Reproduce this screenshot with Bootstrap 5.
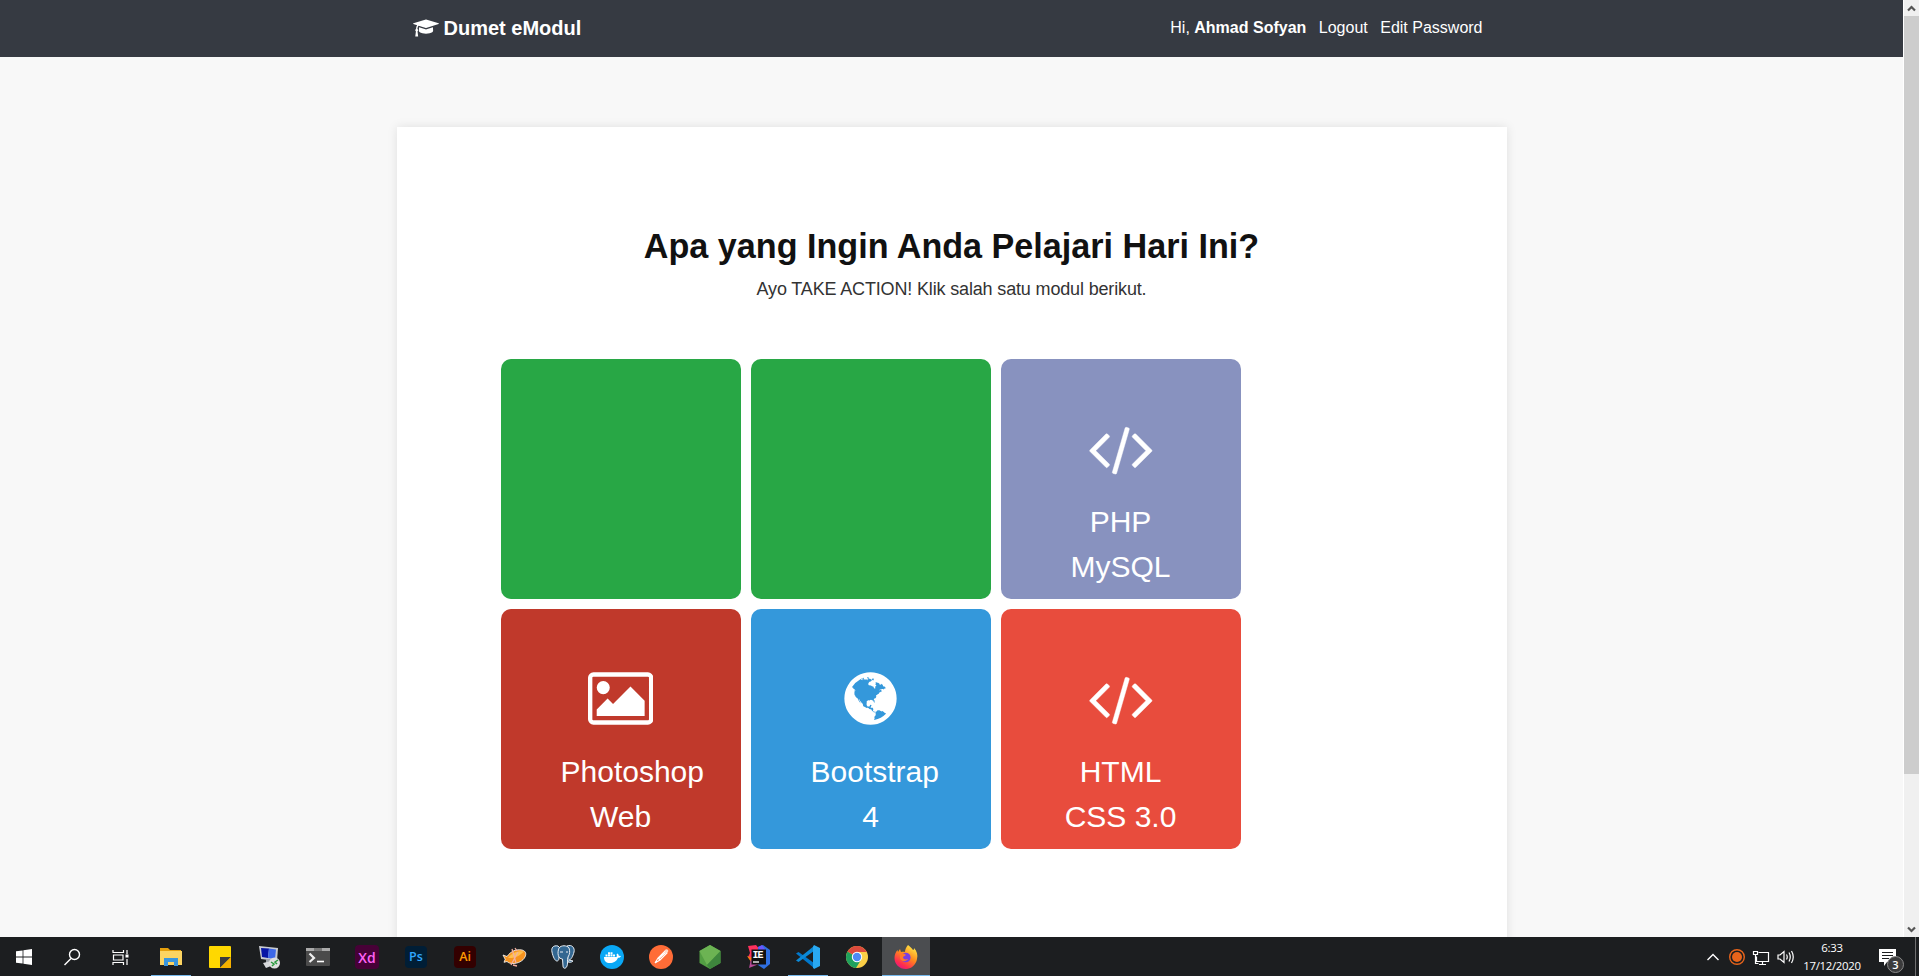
<!DOCTYPE html>
<html lang="id">
<head>
<meta charset="utf-8">
<meta name="viewport" content="width=device-width, initial-scale=1">
<title>Dumet eModul</title>
<link href="https://cdn.jsdelivr.net/npm/bootstrap@5.3.0/dist/css/bootstrap.min.css" rel="stylesheet">
<style>
  body{font-family:"Liberation Sans",Arial,sans-serif;background:#f8f8f8;height:976px;color:#333}
  .viewport{height:937px}
  .topbar{background:#363a42;height:57px}
  .wrap{width:1110px}
  .topbar .wrap{padding:0 24px 0 16px}
  .brand{font-size:20px;gap:5px;padding-bottom:1px}
  .menu{gap:12.5px;padding-bottom:1px}
  .menu a,.brand{color:#fff;text-decoration:none}
  .sheet{margin-top:70px;height:900px;padding:97px 104px 0;box-shadow:0 0 10px rgba(0,0,0,.1)}
  .title{font-size:34.15px;line-height:44px;color:#111;margin:0}
  .sub{font-size:18px;line-height:27px;margin:7.500px 0 0;letter-spacing:-.155px}
  .tiles{margin-top:56.500px;gap:10px;width:740px}
  .tile{width:240px;height:240px;border-radius:10px;padding:59px 60px 0;color:#fff;font-size:30px;line-height:45px;text-decoration:none;background:#28a745}
  .tile svg{display:block;margin:0 auto 20px;height:61px}
  .tile span{display:block;white-space:nowrap;width:120px}
  .php{background:#8892bf}.pshop{background:#c0392b}.boot{background:#3498db}.html5{background:#e84c3d}
  .scroller{width:16px;background:#f0f0f0;border-left:1px solid #fff}
  .thumb{height:758px;background:#cdcdcd}
  .taskbar{height:39px;background:#1c1e20;font-family:"Open Sans","Noto Sans",sans-serif}
  .cell{width:48px;height:39px;padding-top:1px}
  .app{width:49px;height:39px;padding-top:1px;background:linear-gradient(#76b9ed,#76b9ed) center bottom/0 1px no-repeat}
  .run{background-size:40px 1px}
  .now{background-color:#4b4d50;background-size:49px 1px;width:48px}
  .clock{font-size:11.400px;line-height:18px;color:#fff;width:70px;letter-spacing:-.3px}
  .adobe{width:24px;height:24px;border-radius:4px;font-weight:600;font-size:14px}
  .xd{background:#470137;color:#ff61f6}.ps{background:#001e36;color:#31a8ff;width:22px;height:22px;font-size:12.500px}.ai{background:#330000;color:#ff9a00;width:22px;height:22px;font-size:12.500px}
  .noti{width:24px;height:24px;margin:8px 12px 0}
  .count{position:absolute;left:8px;top:7px;width:17px;height:17px;border:1px solid #8a8a8a;background:#3b3b3c;color:#fff;font-size:11px;font-weight:600;line-height:15px}
  .peek{border-left:1px solid #6f6f70;margin-right:3px}
</style>
</head>
<body class="overflow-hidden d-flex flex-column">
<div class="viewport d-flex overflow-hidden">
  <div class="flex-grow-1">
    <nav class="topbar d-flex justify-content-center">
      <div class="wrap d-flex justify-content-between align-items-center">
        <a class="brand d-flex align-items-center fw-bold" href="#">
          <svg width="26" height="20" viewBox="0 0 2304 1792" fill="#fff"><path d="M1774 836l18 316q4 69-82 128t-235 93.500-323 34.500-323-34.500-235-93.500-82-128l18-316 574 181q22 7 48 7t48-7zm530-324q0 23-22 31l-1120 352q-4 1-10 1t-10-1l-652-206q-43 34-71 111.500t-34 178.500q63 36 63 109 0 69-58 107l58 433q2 14-8 25-9 11-24 11h-192q-15 0-24-11-10-11-8-25l58-433q-58-38-58-107 0-73 65-111 11-207 98-330l-333-104q-22-8-22-31t22-31l1120-352q4-1 10-1t10 1l1120 352q22 8 22 31z"/></svg>
          Dumet eModul
        </a>
        <div class="menu d-flex text-white"><span>Hi, <b>Ahmad Sofyan</b></span><a href="#">Logout</a><a href="#">Edit Password</a></div>
      </div>
    </nav>
    <main class="sheet wrap bg-white mx-auto">
      <h1 class="title fw-bold text-center">Apa yang Ingin Anda Pelajari Hari Ini?</h1>
      <p class="sub text-center">Ayo TAKE ACTION! Klik salah satu modul berikut.</p>
      <div class="tiles d-flex flex-wrap">
        <a class="tile" href="#"></a>
        <a class="tile" href="#"></a>
        <a class="tile php text-center" href="#"><svg viewBox="0 0 2048 1792" fill="#fff"><path id="code" d="M681 1399l-50 50q-10 10-23 10t-23-10l-466-466q-10-10-10-23t10-23l466-466q10-10 23-10t23 10l50 50q10 10 10 23t-10 23l-393 393 393 393q10 10 10 23t-10 23zm591-1067l-373 1291q-4 13-15.500 19.500t-23.500 2.500l-62-17q-13-4-19.500-15.500t-2.500-24.500l373-1291q4-13 15.500-19.500t23.500-2.500l62 17q13 4 19.500 15.500t2.500 24.500zm657 651l-466 466q-10 10-23 10t-23-10l-50-50q-10-10-10-23t10-23l393-393-393-393q-10-10-10-23t10-23l50-50q10-10 23-10t23 10l466 466q10 10 10 23t-10 23z" stroke="#fff" stroke-width="14"/></svg><span>PHP<br>MySQL</span></a>
        <a class="tile pshop text-center" href="#"><svg viewBox="0 0 1920 1792" fill="#fff"><path d="M640 576q0 80-56 136t-136 56-136-56-56-136 56-136 136-56 136 56 56 136zm1024 384v448h-1408v-192l320-320 160 160 512-512zm96-704h-1600q-13 0-22.500 9.500t-9.500 22.500v1216q0 13 9.500 22.500t22.500 9.500h1600q13 0 22.500-9.500t9.500-22.500v-1216q0-13-9.500-22.500t-22.500-9.500zm160 32v1216q0 66-47 113t-113 47h-1600q-66 0-113-47t-47-113v-1216q0-66 47-113t113-47h1600q66 0 113 47t47 113z"/></svg><span>Photoshop</span><span>Web</span></a>
        <a class="tile boot text-center" href="#"><svg viewBox="0 0 1792 1792" fill="#fff"><path d="M896 128q209 0 385.500 103t279.500 279.500 103 385.500-103 385.500-279.500 279.500-385.500 103-385.500-103-279.500-279.500-103-385.500 103-385.500 279.500-279.500 385.500-103zm274 521q-2 1-9.500 9.500t-13.500 9.500q2 0 4.500-5t5-11 3.500-7q6-7 22-15 14-6 52-12 34-8 51 11-2-2 9.500-13t14.500-12q3-2 15-4.500t15-7.500l2-22q-12 1-17.500-7t-6.500-21q0 2-6 8 0-7-4.500-8t-11.500 1-9 1q-10-3-15-7.500t-8-16.500-4-15q-2-5-9.500-11t-9.500-10q-1-2-2.500-5.500t-3-6.500-4-5.500-5.500-2.500-7 5-7.500 10-4.500 5q-3-2-6-1.500t-4.500 1-4.500 3-5 3.500q-3 2-8.500 3t-8.500 2q15-5-1-11-10-4-16-3 9-4 7.500-12t-8.500-14h5q-1-4-8.500-8.500t-17.500-8.500-13-6q-8-5-34-9.500t-33-.5q-5 6-4.500 10.500t4 14 3.500 12.500q1 6-5.500 13t-6.500 12q0 7 14 15.500t10 21.500q-3 8-16 16t-16 12q-5 8-1.500 18.500t10.500 16.500q2 2 1.500 4t-3.500 4.500-5.500 4-6.500 3.500l-3 2q-11 5-20.500-6t-13.500-26q-7-25-16-30-23-8-29 1-5-13-41-26-25-9-58-4 6-1 0-15-7-15-19-12 3-6 4-17.500t1-13.500q3-13 12-23 1-1 7-8.500t9.500-13.500.5-6q35 4 50-11 5-5 11.500-17t10.500-17q9-6 14-5.500t14.500 5.500 14.500 5q14 1 15.500-11t-7.500-20q12 1 3-17-5-7-8-9-12-4-27 5-8 4 2 8-1-1-9.500 10.500t-16.500 17.500-16-5q-1-1-5.500-13.500t-9.500-13.500q-8 0-16 15 3-8-11-15t-24-8q19-12-8-27-7-4-20.500-5t-19.500 4q-5 7-5.500 11.500t5 8 10.500 5.500 11.500 4 8.500 3q14 10 8 14-2 1-8.500 3.500t-11.500 4.500-6 4q-3 4 0 14t-2 14q-5-5-9-17.500t-7-16.500q7 9-25 6l-10-1q-4 0-16 2t-20.500 1-13.500-8q-4-8 0-20 1-4 4-2-4-3-11-9.500t-10-8.500q-46 15-94 41 6 1 12-1 5-2 13-6.500t10-5.500q34-14 42-7l5-5q14 16 20 25-7-4-30-1-20 6-22 12 7 12 5 18-4-3-11.500-10t-14.500-11-15-5q-16 0-22 1-146 80-235 222 7 7 12 8 4 1 5 9t2.500 11 11.500-3q9 8 3 19 1-1 44 27 19 17 21 21 3 11-10 18-1-2-9-9t-9-4q-3 5 .5 18.500t10.500 12.500q-7 0-9.500 16t-2.500 35.500-1 23.500l2 1q-3 12 5.500 34.500t21.500 19.500q-13 3 20 43 6 8 8 9 3 2 12 7.500t15 10 10 10.500q4 5 10 22.500t14 23.500q-2 6 9.500 20t10.500 23q-1 0-2.500 1t-2.500 1q3 7 15.500 14t15.500 13q1 3 2 10t3 11 8 2q2-20-24-62-15-25-17-29-3-5-5.500-15.500t-4.500-14.500q2 0 6 1.500t8.500 3.500 7.500 4 2 3q-3 7 2 17.500t12 18.500 17 19 12 13q6 6 14 19.500t0 13.500q9 0 20 10.500t17 19.500q5 8 8 26t5 24q2 7 8.500 13.500t12.500 9.500l16 8 13 7q5 2 18.500 10.500t21.500 11.500q10 4 16 4t14.500-2.500 13.500-3.500q15-2 29 15t21 21q36 19 55 11-2 1 .5 7.500t8 15.500 9 14.500 5.500 8.500q5 6 18 15t18 15q6-4 7-9-3 8 7 20t18 10q14-3 14-32-31 15-49-18 0-1-2.500-5.500t-4-8.500-2.500-8.500 0-7.500 5-3q9 0 10-3.500t-2-12.500-4-13q-1-8-11-20t-12-15q-5 9-16 8t-16-9q0 1-1.500 5.500t-1.500 6.500q-13 0-15-1 1-3 2.500-17.500t3.500-22.500q1-4 5.500-12t7.500-14.500 4-12.500-4.500-9.500-17.500-2.500q-19 1-26 20-1 3-3 10.500t-5 11.500-9 7q-7 3-24 2t-24-5q-13-8-22.500-29t-9.500-37q0-10 2.500-26.500t3-25-5.500-24.500q3-2 9-9.500t10-10.500q2-1 4.500-1.500t4.500 0 4-1.500 3-6q-1-1-4-3-3-3-4-3 7 3 28.500-1.500t27.500 1.500q15 11 22-2 0-1-2.500-9.500t-.5-13.500q5 27 29 9 3 3 15.500 5t17.500 5q3 2 7 5.500t5.500 4.500 5-.5 8.500-6.500q10 14 12 24 11 40 19 44 7 3 11 2t4.500-9.500 0-14-1.500-12.500l-1-8v-18l-1-8q-15-3-18.500-12t1.500-18.500 15-18.500q1-1 8-3.500t15.500-6.500 12.500-8q21-19 15-35 7 0 11-9-1 0-5-3t-7.500-5-4.500-2q9-5 2-16 5-3 7.500-11t7.500-10q9 12 21 2 7-8 1-16 5-7 20.500-10.500t18.500-9.500q7 2 8-2t1-12 3-12q4-5 15-9t13-5l17-11q3-4 0-4 18 2 31-11 10-11-6-20 3-6-3-9.500t-15-5.500q3-1 11.500-.5t10.500-1.500q15-10-7-16-17-5-43 12zm-163 877q206-36 351-189-3-3-12.500-4.500t-12.500-3.500q-18-7-24-8 1-7-2.500-13t-8-9-12.500-8-11-7q-2-2-7-6t-7-5.500-7.500-4.500-8.500-2-10 1l-3 1q-3 1-5.500 2.500t-5.500 3-4 3 0 2.500q-21-17-36-22-5-1-11-5.500t-10.500-7-10-1.500-11.500 7q-5 5-6 15t-2 13q-7-5 0-17.500t2-18.500q-3-6-10.500-4.500t-12 4.500-11.500 8.500-9 6.500-8.500 5.500-8.500 7.500q-3 4-6 12t-5 11q-2-4-11.500-6.500t-9.500-5.500q2 10 4 35t5 38q7 31-12 48-27 25-29 40-4 22 12 26 0 7-8 20.500t-7 21.500q0 6 2 16z"/></svg><span>Bootstrap</span><span>4</span></a>
        <a class="tile html5 text-center" href="#"><svg viewBox="0 0 2048 1792" fill="#fff"><use href="#code"/></svg><span>HTML</span><span>CSS 3.0</span></a>
      </div>
    </main>
  </div>
  <div class="scroller d-flex flex-column flex-shrink-0">
    <svg width="15" height="16" viewBox="0 0 15 16"><path d="M4 10.500L7.500 7l3.500 3.500" fill="none" stroke="#555" stroke-width="2.200"/></svg>
    <div class="thumb"></div>
    <svg class="mt-auto" width="15" height="16" viewBox="0 0 15 16"><path d="M4 6.500L7.500 10 11 6.500" fill="none" stroke="#555" stroke-width="2.200"/></svg>
  </div>
</div>

<footer class="taskbar d-flex">
  <div class="cell d-flex align-items-center justify-content-center"><svg width="16" height="16" fill="#fff"><path d="M0 2.300L6.600 1.400V7.600H0zM7.400 1.300L16 0V7.600H7.400zM0 8.400H6.600V14.600L0 13.700zM7.400 8.400H16V16L7.400 14.700z"/></svg></div>
  <div class="cell d-flex align-items-center justify-content-center"><svg width="18" height="18" fill="none" stroke="#fff" stroke-width="1.400"><circle cx="11.500" cy="6.500" r="5"/><path d="M8 10.500L1.500 17"/></svg></div>
  <div class="cell d-flex align-items-center justify-content-center"><svg width="17" height="17" fill="none" stroke="#fff" stroke-width="1.200"><path d="M1 1v2.500h10.500V1M1 16v-2.500h10.500V16M1.500 6h9.500v5H1.500zM15 1v4M15 10v6"/><path d="M13.500 5.500h3v3h-3z" fill="#fff" stroke="none"/></svg></div>
  <div style="width:2.500px"></div>
  <!-- file explorer -->
  <div class="app run d-flex align-items-center justify-content-center"><svg width="22" height="18"><path d="M0 0h8l2 2h11v4H0z" fill="#e5a00d"/><path d="M0 3h22v14H0z" fill="#fcd462"/><path d="M4 18v-8h14v8h-4v-4H8v4z" fill="#3a96dd"/></svg></div>
  <!-- sticky notes -->
  <div class="app d-flex align-items-center justify-content-center"><svg width="22" height="22"><rect width="22" height="22" rx="1" fill="#ffd800"/><path d="M11 11h11L11 22z" fill="#3d3d3d"/><path d="M22 11v11H11z" fill="#f5b000"/></svg></div>
  <!-- remote desktop -->
  <div class="app d-flex align-items-center justify-content-center"><svg width="24" height="24"><path d="M2 1l19 2-1 13L4 14z" fill="#c9ccd2"/><path d="M4 3l8 .5-1 9.500-6-1z" fill="#0716a5"/><path d="M12 3.500l7 1-1 9.500-7-1z" fill="#3d68e8"/><path d="M9 14h5v4H9z" fill="#9fa4aa"/><path d="M6 18l8-2 5 3-10 4z" fill="#d7d9dc"/><circle cx="17.500" cy="18" r="5.500" fill="#dedede"/><path d="M14 17l3 2-2 2M21 15l-3 2 2 2" fill="none" stroke="#269a3a" stroke-width="1.500"/></svg></div>
  <!-- terminal -->
  <div class="app d-flex align-items-center justify-content-center"><svg width="24" height="18"><rect width="24" height="18" rx="1" fill="#4b4b4b"/><path d="M0 0h24v3H0z" fill="#aaa"/><path d="M8 0h8v3H8z" fill="#777"/><path d="M3.500 5.500L8 10l-4.500 4" fill="none" stroke="#eee" stroke-width="2.200"/><path d="M11 13.500h7" stroke="#fff" stroke-width="1.600"/></svg></div>
  <div class="app d-flex align-items-center justify-content-center"><div class="adobe xd d-flex align-items-center justify-content-center">Xd</div></div>
  <div class="app d-flex align-items-center justify-content-center"><div class="adobe ps d-flex align-items-center justify-content-center">Ps</div></div>
  <div class="app d-flex align-items-center justify-content-center"><div class="adobe ai d-flex align-items-center justify-content-center">Ai</div></div>
  <!-- zeppelin -->
  <div class="app d-flex align-items-center justify-content-center"><svg width="25" height="20"><path d="M1 8l4 1.500C9 4 14 2 20 3c4 1 4.500 4 3 7-2 4-7 6.500-12 6.500-2.500 0-4.500-.5-6-2l-3 .8 1.200-3z" fill="#f7931e" stroke="#fff" stroke-width=".8"/><path d="M6 11c4-5 9-7.500 16-6.500-4 4-9 7-16 6.500z" fill="#ffc04d"/><path d="M10 2l4 14M13 1l2 3M9 18l7-13M11 18l4 1" stroke="#f3b0a0" stroke-width="1.300" fill="none"/></svg></div>
  <!-- elephant -->
  <div class="app d-flex align-items-center justify-content-center"><svg width="24" height="24" fill="#336791" stroke="#e8edf2" stroke-width="1"><path d="M7 1C2 0 0 3 1 7c1 5 3 9 5 9 1 0 2-1 2-3l1-10z"/><path d="M16 1c5-2 8 2 7 6-1 4-3 8-5 8l4 1c-2 2-4 1-5 1z"/><path d="M8 3c2-3 8-3 10 0 1 3 1 6-1 9-1 3 0 7-1 9-1 3-4 3-4 0l-.5-7C7 14 6 8 8 3z"/><path d="M9 7h3M15 7h2" /></svg></div>
  <!-- docker -->
  <div class="app d-flex align-items-center justify-content-center"><svg width="24" height="24"><circle cx="12" cy="12" r="12" fill="#0aa8f5"/><path d="M4 12h12.500c.6-1 .3-2 0-2.500l1-1c1 .8 1.300 1.500 1.300 2.200l2.200.3c-.5 1.400-1.600 1.800-3 1.800C16.500 16.500 13.500 18 10 18c-4 0-6-2-6-6zM5.500 9.500h2v2h-2zM8 9.500h2v2H8zM10.500 9.500h2v2h-2zM8 7.200h2v2H8zM10.500 7.200h2v2h-2zM13 9.500h2v2h-2z" fill="#fff"/></svg></div>
  <!-- postman -->
  <div class="app d-flex align-items-center justify-content-center"><svg width="24" height="24"><circle cx="12" cy="12" r="12" fill="#ff6c37"/><path d="M6 18l3-5 7-7 2 2-7 7-5 3M9 13l2 2M10 13.500l6.500-6" fill="none" stroke="#fff" stroke-width="1.100"/><circle cx="17.500" cy="6" r="1.800" fill="#ffd9c9"/></svg></div>
  <!-- node -->
  <div class="app d-flex align-items-center justify-content-center"><svg width="22" height="24"><path d="M11 0l10.500 6v12L11 24 .5 18V6z" fill="#539e43"/><path d="M11 0l10.500 6L8 20 .5 6z" fill="#6cb353"/><path d="M21.500 6v12L11 24l-3-4z" fill="#3e863d"/></svg></div>
  <!-- IDE -->
  <div class="app d-flex align-items-center justify-content-center"><svg width="24" height="24"><path d="M1 1l8-1 5 6-8 10-5-4 2-4z" fill="#fe315d"/><path d="M0 11l6 2-2 4z" fill="#f97a12"/><path d="M2 23l2-9 8 5z" fill="#b74a97"/><path d="M11 2l5-2 7 5v14l-6 5-6-4z" fill="#2f6fe0"/><path d="M11 2l4-2 4 6h-6z" fill="#6b57ff"/><path d="M4.500 4.500h14.500v15H4.500z" fill="#111"/><text x="5.500" y="12.500" font-family="Liberation Mono,monospace" font-weight="bold" font-size="10" textLength="11" fill="#fff">IE</text><path d="M6 17h6" stroke="#fff" stroke-width="1.300"/></svg></div>
  <!-- vs code -->
  <div class="app run d-flex align-items-center justify-content-center"><svg width="24" height="24"><path d="M0 8.500L2.500 7 18 18v5z" fill="#0078cc"/><path d="M0 15.500L2.500 17 18 6V1z" fill="#0b8ad8"/><path d="M18 0l6 3v18l-6 3-1-1.500V1.500z" fill="#29a9f2"/></svg></div>
  <!-- chrome -->
  <div class="app d-flex align-items-center justify-content-center"><svg width="22" height="22" viewBox="0 0 22 22"><circle cx="11" cy="11" r="11" fill="#fbcf46"/><path d="M11 11L1.500 5.500A11 11 0 0 0 10 22l5.500-9z" fill="#1fa15d"/><path d="M11 11L1.500 5.500A11 11 0 0 1 20.500 5.500L20.800 6H11z" fill="#dc4a3d"/><circle cx="11" cy="11" r="5.200" fill="#fff"/><circle cx="11" cy="11" r="4.200" fill="#4d8af4"/></svg></div>
  <!-- firefox -->
  <div class="app now d-flex align-items-center justify-content-center"><svg width="24" height="24"><defs><linearGradient id="fox" x1=".8" y1="0" x2=".2" y2="1"><stop offset="0" stop-color="#fff04a"/><stop offset=".45" stop-color="#ff8a1c"/><stop offset=".8" stop-color="#ff2b50"/><stop offset="1" stop-color="#e21587"/></linearGradient></defs><path d="M14 0c2 2 4 3 5 5 1 0 1-1 1-2 3 3 4 7 3 11-1 6-6 10-11 10C5 24 .5 19 .5 13c0-3 1-6 3-8l.5 2 2-3 1 3c1-.5 3-.5 4 0C11 5 12 2 14 0z" fill="url(#fox)"/><circle cx="11.800" cy="12.500" r="4.800" fill="#7a3fe0"/><path d="M6 9c3-1 5 0 6 1l-3 2c0 2 2 3 5 2-2 3-7 3-8-1z" fill="#ff7a2a"/></svg></div>

  <div class="ms-auto d-flex align-items-center text-center">
    <svg width="98" height="39" viewBox="0 0 98 39" fill="none" stroke="#fff" stroke-width="1.400">
      <path d="M8.500 23l5.500-5.500 5.500 5.500"/>
      <circle cx="38" cy="20" r="7.300" stroke="#e8641b"/><circle cx="38" cy="20" r="5" fill="#e8641b" stroke="none"/>
      <path d="M59.500 15.500h10v9h-12v-5M54.500 14.500h4v3h-4zM56.500 17.500v9h3M63.500 24.500v2.500M60 27.500h7" stroke-width="1.200"/>
      <path d="M79 18h2l4-3.500v11L81 22h-2zM87.500 17.500q1.500 2.500 0 5M90 15.500q2.500 4.500 0 9M92.500 14q3.500 6 0 12" stroke-width="1.200"/>
    </svg>
    <div class="clock"><div>6:33</div><div>17/12/2020</div></div>
    <div class="noti position-relative"><svg class="d-block" width="17" height="17"><path d="M0 0h17v13H8l-3 4v-4H0z" fill="#fff"/><path d="M3 3.500h11M3 6.500h11M3 9.500h7" stroke="#1c1e20" stroke-width="1"/></svg><span class="count rounded-circle">3</span></div>
    <div class="peek h-100"></div>
  </div>
</footer>
<script src="https://cdn.jsdelivr.net/npm/bootstrap@5.3.0/dist/js/bootstrap.bundle.min.js"></script>
</body>
</html>
